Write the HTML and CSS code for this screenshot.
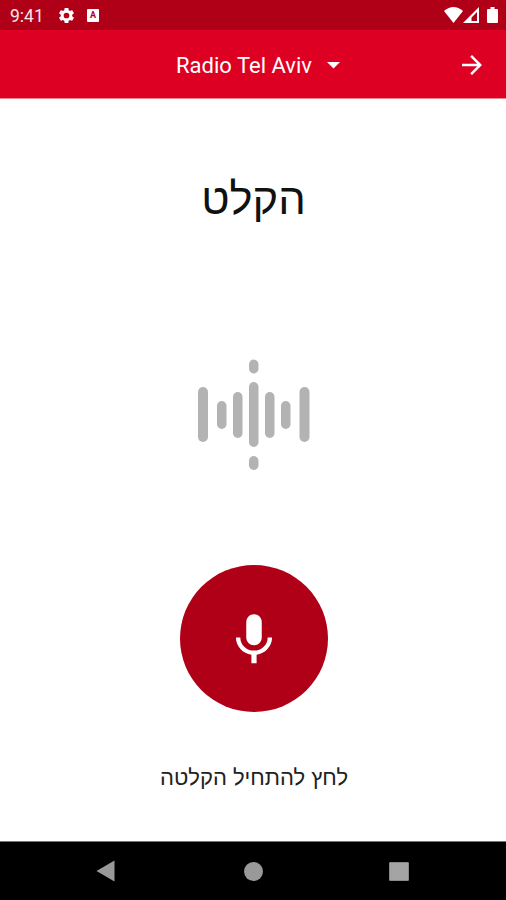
FILE: index.html
```html
<!DOCTYPE html>
<html lang="he">
<head>
    <meta charset="UTF-8">
    <meta name="viewport" content="width=device-width, initial-scale=1">
    <title>Radio Tel Aviv</title>
    <link rel="stylesheet" href="styles.css">
</head>
<body>

<div class="status-bar">
    <span class="clock">9:41</span>
    <svg class="gear" viewBox="0 0 24 24"><path d="M19.14 12.94c.04-.3.06-.61.06-.94s-.02-.64-.07-.94l2.03-1.58a.49.49 0 0 0 .12-.61l-1.92-3.32a.49.49 0 0 0-.59-.22l-2.39.96a7 7 0 0 0-1.62-.94l-.36-2.54A.48.48 0 0 0 13.92 2.4h-3.84c-.24 0-.43.17-.47.41l-.36 2.54c-.59.24-1.13.57-1.62.94l-2.39-.96a.48.48 0 0 0-.59.22L2.74 8.87c-.12.21-.08.47.12.61l2.03 1.58c-.05.3-.09.63-.09.94s.02.64.07.94l-2.03 1.58a.49.49 0 0 0-.12.61l1.92 3.32c.12.22.37.29.59.22l2.39-.96c.5.38 1.03.7 1.62.94l.36 2.54c.05.24.24.41.48.41h3.84c.24 0 .44-.17.47-.41l.36-2.54c.59-.24 1.13-.56 1.62-.94l2.39.96c.22.08.47 0 .59-.22l1.92-3.32a.48.48 0 0 0-.12-.61zM12 15.6a3.6 3.6 0 1 1 0-7.2 3.6 3.6 0 0 1 0 7.2z"/></svg>
    <span class="app-badge">A</span>
    <div class="status-icons">
        <svg width="19" height="17" viewBox="0 0 19 17"><path d="M0 4Q9.500-4 19 4L9.500 16z"/></svg>
        <svg width="16" height="17" viewBox="0 0 16 17"><path fill-rule="evenodd" d="M16 0v16H0zM14 5v9H8.500V10.500z"/></svg>
        <svg class="battery" width="11" height="17" viewBox="0 0 11 17"><path d="M3.500 0h4v2H10q1 0 1 1v12q0 1-1 1H1q-1 0-1-1V3q0-1 1-1h2.500z"/></svg>
    </div>
</div>

<div class="app-bar">
    <div class="station">
        <span>Radio Tel Aviv</span>
        <svg width="13" height="7" viewBox="0 0 13 7"><path d="M0 0h13L6.500 6.500z"/></svg>
    </div>
    <svg class="arrow" viewBox="0 0 24 24"><path d="M12 4l-1.410 1.410L16.170 11H4v2h12.170l-5.580 5.590L12 20l8-8z"/></svg>
</div>

<main class="content">
    <h1 class="title" dir="rtl">הקלט</h1>
    <!-- גלי קול -->
    <svg class="wave" width="112" height="112" viewBox="0 0 112 112">
        <rect x="0" y="28" width="10" height="55" rx="5"/>
        <rect x="19" y="42" width="9.500" height="28" rx="4.750"/>
        <rect x="35" y="33" width="9.500" height="46" rx="4.750"/>
        <rect x="51" y="23" width="9.500" height="65" rx="4.750"/>
        <rect x="51" y="0.500" width="9.500" height="14" rx="4.750"/>
        <rect x="51" y="97" width="9.500" height="14" rx="4.750"/>
        <rect x="67" y="33" width="9.500" height="46" rx="4.750"/>
        <rect x="83" y="42" width="9.500" height="28" rx="4.750"/>
        <rect x="101.500" y="28" width="10" height="55" rx="5"/>
    </svg>
    <button class="record" aria-label="הקלט">
        <svg class="mic" viewBox="0 0 24 24"><path d="M12 14c1.660 0 3-1.340 3-3V5c0-1.660-1.340-3-3-3S9 3.340 9 5v6c0 1.660 1.340 3 3 3z"/><path d="M17.300 11c0 2.850-2.380 5.100-5.300 5.100S6.700 13.850 6.700 11H5c0 3.420 2.720 6.230 6 6.720V21h2v-3.280c3.280-.490 6-3.300 6-6.720z"/></svg>
    </button>
    <p class="hint" dir="rtl">לחץ להתחיל הקלטה</p>
</main>

<div class="nav-bar">
    <svg width="19" height="22" viewBox="0 0 19 22"><path d="M18.500 0.500v21L0.500 11z"/></svg>
    <span class="nav-home"></span>
    <span class="nav-recent"></span>
</div>

</body>
</html>
```
FILE: styles.css
```css
* {
    box-sizing: border-box;
}
body {
    margin: 0;
    height: 900px;
    display: flex;
    flex-direction: column;
    background-color: #fff;
    font-family: Roboto, "Open Sans", sans-serif;
    overflow: hidden;
}
svg {
    display: block;
    fill: #fff;
}
.status-bar {
    display: flex;
    align-items: center;
    height: 30px;
    padding: 1px 8px 0 10px;
    background-color: #b00018;
    color: #fff;
}
.clock {
    width: 47px;
    font-size: 17.500px;
    line-height: 30px;
    opacity: 0.9;
}
.gear {
    width: 19px;
    height: 19px;
}
.app-badge {
    width: 12px;
    height: 13px;
    margin-left: 11px;
    border-radius: 1px;
    background-color: #fff;
    color: #b00018;
    font-size: 9px;
    font-weight: bold;
    line-height: 13px;
    text-align: center;
}
.status-icons {
    display: flex;
    margin-left: auto;
}
.battery {
    margin-left: 8px;
}
.app-bar {
    display: grid;
    grid-template-columns: 50px 1fr 50px;
    align-items: center;
    height: 69px;
    padding: 2px 9px 0;
    border-bottom: 1px solid #ee8590;
    background-color: #dd0022;
    color: #fff;
}
.station {
    grid-column: 2;
    display: flex;
    justify-content: center;
    align-items: center;
    gap: 15px;
    padding-left: 10px;
    font-size: 22px;
    white-space: nowrap;
}
.arrow {
    width: 30px;
    height: 30px;
    margin-left: 10px;
}
.content {
    flex: 1;
    display: flex;
    flex-direction: column;
    align-items: center;
}
.title {
    margin: 68px 0 0 1px;
    font-family: "Liberation Sans", sans-serif;
    font-size: 43.500px;
    font-weight: normal;
    line-height: 64px;
    color: #111;
}
.wave {
    margin-top: 128px;
    margin-left: 2px;
    fill: #b3b3b3;
}
.record {
    display: flex;
    justify-content: center;
    align-items: center;
    width: 148px;
    height: 147px;
    margin-top: 94px;
    margin-left: 1px;
    padding: 3px 0 0;
    border: none;
    border-radius: 50%;
    background-color: #b00018;
    cursor: pointer;
}
.mic {
    width: 62px;
    height: 62px;
}
.hint {
    margin: 50px 0 0 2px;
    font-family: "Liberation Sans", sans-serif;
    font-size: 22px;
    line-height: 32px;
    color: #222;
}
.nav-bar {
    display: flex;
    align-items: center;
    justify-content: space-between;
    height: 59px;
    padding: 0 97px 0 96px;
    border-top: 1px solid #777;
    background-color: #000;
}
.nav-bar svg {
    fill: #999;
}
.nav-home {
    width: 19px;
    height: 19px;
    margin-left: 2px;
    border-radius: 50%;
    background-color: #999;
}
.nav-recent {
    width: 20px;
    height: 19px;
    border: 1px solid #888;
    border-radius: 1px;
    background-color: #a4a4a4;
}
```
